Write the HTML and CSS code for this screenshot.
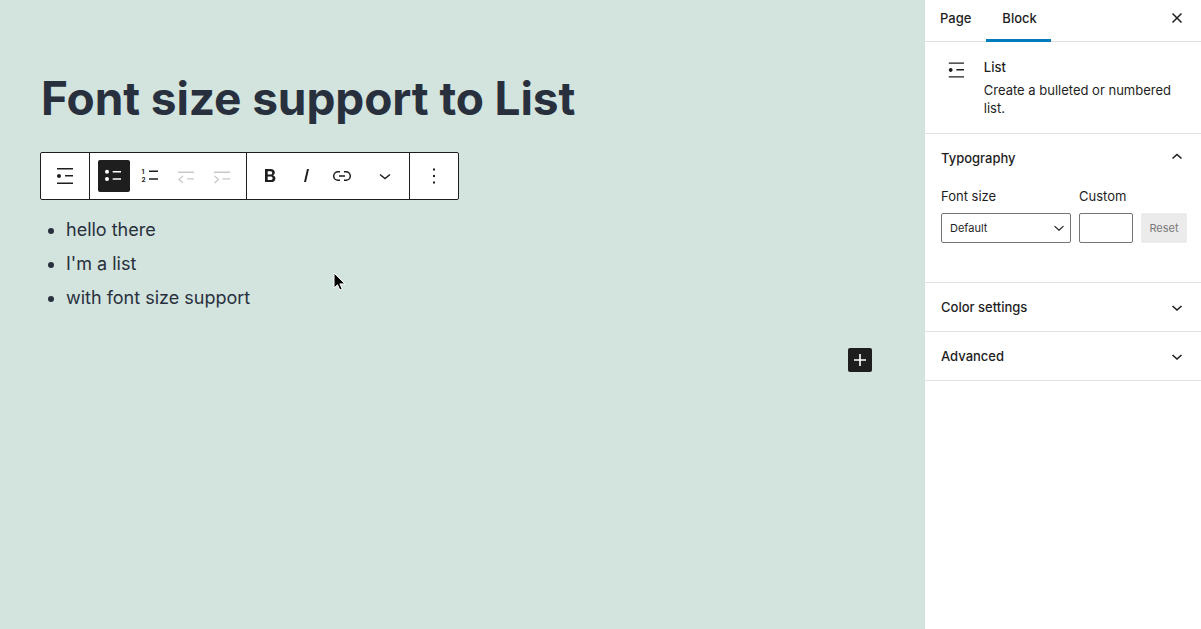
FILE: index.html
```html
<!DOCTYPE html>
<html>
<head>
    <meta charset="utf-8">
    <title>Font size support to List</title>
    <link rel="stylesheet" href="styles.css">
</head>
<body>
    <main class="editor">
        <h1 class="post-title">Font size support to List</h1>

        <div class="block-toolbar">
            <div class="tool-group group-block">
                <button class="tool-btn">
                    <svg width="24" height="24" viewBox="0 0 24 24"><path d="M4 4v1.500h16V4H4zm8 8.500h8V11h-8v1.500zM4 20h16v-1.500H4V20zm4-8c0-1.100-.9-2-2-2s-2 .9-2 2 .9 2 2 2 2-.9 2-2z"/></svg>
                </button>
            </div>
            <div class="tool-group group-list">
                <button class="tool-btn is-active">
                    <svg width="24" height="24" viewBox="0 0 24 24"><circle cx="5" cy="7.700" r="2"/><circle cx="5" cy="15" r="2"/><path d="M10.700 7h8.300v1.500h-8.300zM10.700 14.300h8.300v1.500h-8.300z"/></svg>
                </button>
                <button class="tool-btn">
                    <svg width="24" height="24" viewBox="0 0 24 24"><text class="tiny-num" x="3.500" y="10">1</text><text class="tiny-num" x="3.500" y="17.500">2</text><path d="M11 6.500h9V8h-9zM11 14.300h9v1.500h-9z"/></svg>
                </button>
                <button class="tool-btn is-disabled">
                    <svg width="24" height="24" viewBox="0 0 24 24"><path d="M4 7.500h16V9H4zM13 14.200h7v1.300h-7z"/><path class="thin-line" d="M9 12 5 15.500 9 19"/></svg>
                </button>
                <button class="tool-btn is-disabled">
                    <svg width="24" height="24" viewBox="0 0 24 24"><path d="M4 7.500h16V9H4zM12.500 14.200H20v1.300h-7.500z"/><path class="thin-line" d="M4.500 12l4 3.500-4 3.500"/></svg>
                </button>
            </div>
            <div class="tool-group group-format">
                <button class="tool-btn">
                    <svg width="24" height="24" viewBox="0 0 24 24"><path fill-rule="evenodd" d="M7 5h5.500c2.700 0 4.300 1.300 4.300 3.400 0 1.300-.7 2.300-1.900 2.800 1.500.4 2.500 1.600 2.500 3.200 0 2.400-1.800 3.600-4.600 3.600H7V5zm2.700 2.300v3.200h2.500c1.300 0 2-.6 2-1.600s-.7-1.600-2-1.600H9.700zm0 5.300v3.500h2.800c1.400 0 2.100-.6 2.100-1.800s-.8-1.700-2.200-1.700H9.700z"/></svg>
                </button>
                <button class="tool-btn">
                    <svg width="24" height="24" viewBox="0 0 24 24"><path d="M13 5h2l-3 13h-2z"/></svg>
                </button>
                <button class="tool-btn">
                    <svg width="24" height="24" viewBox="0 0 24 24"><path class="line-icon" d="M10 7.700H8a4.300 4.300 0 0 0 0 8.600h2M14 7.700h2a4.300 4.300 0 0 1 0 8.600h-2M9 12h6"/></svg>
                </button>
                <button class="tool-btn more-formats">
                    <svg width="24" height="24" viewBox="0 0 24 24"><path class="line-icon" d="M7 10.500 12 14.500l5-4"/></svg>
                </button>
            </div>
            <div class="tool-group group-more">
                <button class="tool-btn">
                    <svg width="24" height="24" viewBox="0 0 24 24"><path d="M11 4.500h2v2h-2zM11 11h2v2h-2zM11 17.500h2v2h-2z"/></svg>
                </button>
            </div>
        </div>

        <ul class="post-list">
            <li>hello there</li>
            <li>I'm a list</li>
            <li>with font size support</li>
        </ul>

        <div class="appender-row">
            <button class="appender">
                <svg width="24" height="24" viewBox="0 0 24 24"><path d="M11.200 6h1.600v5.200H18v1.600h-5.200V18h-1.600v-5.200H6v-1.600h5.200z"/></svg>
            </button>
        </div>

        <!-- mouse pointer from the recording -->
        <svg class="cursor" width="14" height="20" viewBox="0 0 14 20"><path d="M1 1v15l3.500-3.200 2.300 5.200 2.400-1-2.300-5.100H12z"/></svg>
    </main>

    <aside class="sidebar">
        <div class="tabs">
            <div class="tab">Page</div>
            <div class="tab is-current">Block</div>
            <button class="close-btn">
                <svg width="24" height="24" viewBox="0 0 24 24"><path class="line-icon" d="m7.500 7.500 9 9M16.500 7.500l-9 9"/></svg>
            </button>
        </div>

        <div class="block-card">
            <svg class="block-card-icon" width="24" height="24" viewBox="0 0 24 24"><path d="M4 4v1.500h16V4H4zm8 8.500h8V11h-8v1.500zM4 20h16v-1.500H4V20zm4-8c0-1.100-.9-2-2-2s-2 .9-2 2 .9 2 2 2 2-.9 2-2z"/></svg>
            <div>
                <div class="block-card-title">List</div>
                <p class="block-card-desc">Create a bulleted or numbered list.</p>
            </div>
        </div>

        <section class="panel panel-open">
            <div class="panel-head">
                <span>Typography</span>
                <svg width="24" height="24" viewBox="0 0 24 24"><path class="line-icon heavy" d="M7.500 12.500 12 8.500l4.500 4"/></svg>
            </div>
            <div class="font-row">
                <div class="field">
                    <label>Font size</label>
                    <div class="select-box">
                        <span>Default</span>
                        <svg width="18" height="18" viewBox="0 0 24 24"><path class="line-icon heavy" d="M6 9.500 12 15l6-5.500"/></svg>
                    </div>
                </div>
                <div class="field">
                    <label>Custom</label>
                    <div class="number-box"></div>
                </div>
                <button class="reset-btn">Reset</button>
            </div>
        </section>

        <section class="panel">
            <div class="panel-head">
                <span>Color settings</span>
                <svg width="24" height="24" viewBox="0 0 24 24"><path class="line-icon heavy" d="M7.500 11 12 15l4.500-4"/></svg>
            </div>
        </section>

        <section class="panel">
            <div class="panel-head">
                <span>Advanced</span>
                <svg width="24" height="24" viewBox="0 0 24 24"><path class="line-icon heavy" d="M7.500 11 12 15l4.500-4"/></svg>
            </div>
        </section>
    </aside>
</body>
</html>
```

FILE: styles.css
```css
html, body {
    height: 100%;
}

body {
    margin: 0;
    display: flex;
    overflow: hidden;
    background: #fff;
    color: #1e1e1e;
    font-family: 'Inter', sans-serif;
}

button {
    font-family: inherit;
    background: none;
    border: none;
    padding: 0;
    cursor: pointer;
}

svg {
    display: block;
    fill: currentColor;
}

.line-icon {
    fill: none;
    stroke: currentColor;
    stroke-width: 1.5;
}

.line-icon.heavy {
    stroke-width: 1.6;
}

.thin-line {
    fill: none;
    stroke: currentColor;
    stroke-width: 1.2;
}

/* Editor canvas */

.editor {
    width: 925px;
    flex: none;
    box-sizing: border-box;
    padding: 70px 0 0 40px;
    background: #d3e3dd;
    position: relative;
}

.post-title {
    margin: 0 0 25px 1px;
    font-size: 46px;
    line-height: 57px;
    font-weight: 700;
    letter-spacing: -0.1px;
    color: #28303d;
}

.block-toolbar {
    display: inline-flex;
    height: 48px;
    background: #fff;
    border: 1px solid #1e1e1e;
    border-radius: 2px;
    box-sizing: border-box;
    vertical-align: top;
}

.tool-group {
    display: flex;
    align-items: center;
    box-sizing: border-box;
    border-right: 1px solid #1e1e1e;
}

.tool-group:last-child {
    border-right: none;
}

.group-block {
    width: 49px;
    justify-content: center;
}

.group-list {
    width: 157px;
    padding-left: 8px;
    gap: 4px;
}

.group-format {
    width: 163px;
    padding-left: 7px;
    gap: 4px;
}

.group-more {
    width: 48px;
    justify-content: center;
}

.tool-btn {
    width: 32px;
    height: 32px;
    display: flex;
    align-items: center;
    justify-content: center;
    border-radius: 2px;
    color: #1e1e1e;
}

.tool-btn.is-active {
    background: #1e1e1e;
    color: #fff;
}

.tool-btn.is-disabled {
    color: #c8c8c8;
}

.more-formats {
    margin-left: 7px;
}

.tiny-num {
    font-size: 6.500px;
    font-weight: 700;
    font-family: 'Inter', sans-serif;
}

.post-list {
    margin: 13px 0 0;
    padding: 0 0 0 26px;
    font-size: 18px;
    line-height: 34px;
    color: #28303d;
}

.appender-row {
    display: flex;
    justify-content: flex-end;
    margin: 33px 53px 0 0;
}

.appender {
    width: 24px;
    height: 24px;
    background: #1e1e1e;
    color: #fff;
    border-radius: 2px;
}

.cursor {
    position: absolute;
    left: 333px;
    top: 272px;
    fill: #000;
    stroke: #fff;
    stroke-width: 1;
}

/* Settings sidebar */

.sidebar {
    flex: 1;
    font-size: 13px;
    line-height: 18px;
}

.tabs {
    display: flex;
    height: 42px;
    box-sizing: border-box;
    border-bottom: 1px solid #e0e0e0;
}

.tab {
    font-weight: 500;
    padding: 9px 15px 0;
    height: 42px;
    box-sizing: border-box;
}

.tab.is-current {
    width: 65px;
    border-bottom: 3px solid #007cba;
    padding-left: 16px;
}

.close-btn {
    margin-left: auto;
    margin-right: 12px;
    height: 36px;
    color: #1e1e1e;
}

.block-card {
    display: flex;
    height: 92px;
    box-sizing: border-box;
    padding: 16px 16px 0 20px;
    border-bottom: 1px solid #e0e0e0;
    gap: 16px;
}

.block-card-title {
    font-weight: 500;
    margin-bottom: 5px;
}

.block-card-desc {
    margin: 0;
}

.panel {
    border-bottom: 1px solid #e0e0e0;
}

.panel-head {
    height: 48px;
    display: flex;
    align-items: center;
    justify-content: space-between;
    padding: 0 12px 0 16px;
    font-weight: 500;
}

.panel-open {
    height: 149px;
    box-sizing: border-box;
}

.font-row {
    display: flex;
    align-items: flex-end;
    gap: 8px;
    padding: 6px 14px 0 16px;
}

.field label {
    display: block;
    margin-bottom: 8px;
    margin-top: -1px;
}

.select-box {
    width: 130px;
    height: 30px;
    box-sizing: border-box;
    border: 1px solid #757575;
    border-radius: 2px;
    display: flex;
    align-items: center;
    justify-content: space-between;
    padding: 0 2px 0 8px;
    font-size: 11px;
}

.number-box {
    width: 54px;
    height: 30px;
    box-sizing: border-box;
    border: 1px solid #757575;
    border-radius: 2px;
}

.reset-btn {
    width: 46px;
    height: 30px;
    background: #ebebeb;
    border-radius: 2px;
    color: #7a7a7a;
    font-size: 11px;
}
```
